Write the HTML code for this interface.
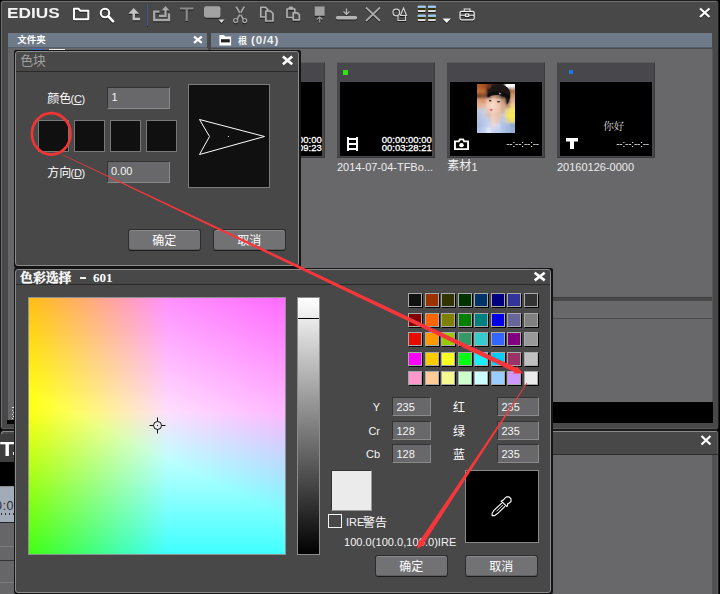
<!DOCTYPE html>
<html><head><meta charset="utf-8"><title>EDIUS</title>
<style>
*{margin:0;padding:0;box-sizing:border-box}
html,body{width:720px;height:594px;overflow:hidden;background:#000}
body{position:relative;font-family:"Liberation Sans",sans-serif;font-size:11px;color:#fff}
.a{position:absolute}
.plane i{display:block;height:1px;width:100%}
.plane{position:absolute;overflow:hidden}
.inp{position:absolute;background:#68686a;border:1px solid;border-color:#333 #8a8a8a #8a8a8a #333;color:#f4f4f4;font-size:11px;line-height:19px;padding-left:3.500px;height:19px}
.btn{position:absolute;background:#727274;border:1px solid #2c2c2c;border-bottom-color:#1c1c1c;border-radius:3px;height:22px;box-shadow:inset 0 1px 0 #8a8a8c, inset 0 -1px 0 #5c5c5e}
.sw{position:absolute;width:14px;height:14px;border:1px solid #a8a8a8;box-shadow:1px 1px 0 #000}
.bsw{position:absolute;width:31px;height:32px;border:1px solid #787878;background:#101010}
.th{position:absolute;width:98px;height:96px;background:#48484c;border-top:1px solid #5c5c5e;border-right:1px solid #3a3a3a;border-bottom:1px solid #3a3a3a}
.th .bk{position:absolute;left:3px;top:19px;width:92px;height:74px;background:#000}
.tc{position:absolute;font-size:10px;line-height:9.143px;color:#fff;text-align:right;letter-spacing:-0.350px;white-space:nowrap;transform:scaleY(0.875);transform-origin:0 0}
.nm{position:absolute;font-size:11px;color:#ececec;white-space:nowrap;top:161px;line-height:13px}
svg text{font-family:"Liberation Sans","Noto Sans CJK SC",sans-serif}
</style></head><body>

<div class="a" style="left:0;top:0;width:719px;height:430px;background:#484848;border:1px solid #1c1c1c;border-radius:3px;box-shadow:inset 1px 1px 0 #707070, inset 0 -1px 0 #585858"></div>
<div class="a" style="left:6.500px;top:6px;font-weight:bold;font-size:13.800px;line-height:16px;color:#f4f4f4;transform-origin:0 50%;transform:scaleX(1.250);letter-spacing:0px">EDIUS</div>
<svg class="a" style="left:0;top:0;filter:drop-shadow(0.800px 1px 0.400px rgba(0,0,0,0.600))" width="720" height="30" viewBox="0 0 720 30" fill="none">

<!-- folder -->
<path d="M74 8.700h4.500l1.500 2h8.300v8.600h-14.300z" stroke="#fff" stroke-width="2" stroke-linejoin="round"/>
<!-- search -->
<circle cx="105" cy="13" r="4.2" stroke="#fff" stroke-width="2"/><path d="M108.5 16.5l4.6 4.8" stroke="#fff" stroke-width="2.6" stroke-linecap="round"/>
<!-- up -->
<path d="M133.700 12v7h6.300" stroke="#c4c4c4" stroke-width="2.400"/><path d="M128.300 13.800l5.400-5.800 5.400 5.800z" fill="#c4c4c4"/>
<!-- sep -->
<path d="M147.5 4v22" stroke="#3c5a8c" stroke-width="1"/>
<!-- export -->
<path d="M159.500 11.700h-5.300v8.300h14.800v-6.500" stroke="#a8a8a8" stroke-width="2.300"/><path d="M159 16h6.500v-6" stroke="#a8a8a8" stroke-width="2.300"/><path d="M161.500 10.500l4-4.500 4 4.500z" fill="#a8a8a8"/>
<!-- T -->
<path d="M180 8.500h13.500M186.700 8.500v12.500" stroke="#8c8c8c" stroke-width="2.200"/>
<!-- rect -->
<rect x="204" y="6.3" width="16.500" height="11.400" rx="2" fill="#a2a2a2"/>
<path d="M218.500 19.500h6l-3 3.500z" fill="#d8d8d8"/>
<!-- scissors -->
<path d="M235.200 6.800l1.900-0.300 6.600 12-1.300 0.900zM245.200 6.800l-1.900-0.300-6.600 12 1.300 0.900z" fill="#a8a8a8"/><circle cx="235.700" cy="20.600" r="2" stroke="#a8a8a8" stroke-width="1.300"/><circle cx="244.700" cy="20.600" r="2" stroke="#a8a8a8" stroke-width="1.300"/>
<!-- copy -->
<path d="M260.800 7.400h4.700l2.300 2.300v7.300h-7z" stroke="#b0b0b0" stroke-width="1.700" stroke-linejoin="round"/><path d="M265.800 11h4.700l2.500 2.500v7.500h-7.200z" stroke="#b0b0b0" stroke-width="1.700" fill="#484848" stroke-linejoin="round"/>
<!-- paste -->
<path d="M287 9h7.800v8.500h-7.800z" stroke="#b0b0b0" stroke-width="1.700" stroke-linejoin="round"/><path d="M289.200 7h3.600v2h-3.600z" fill="#b0b0b0" stroke="#b0b0b0" stroke-width="0.800"/><path d="M293.200 12.800h4.200l2 2v5h-6.200z" stroke="#b0b0b0" stroke-width="1.700" fill="#484848" stroke-linejoin="round"/>
<!-- square arrow -->
<rect x="314.7" y="6.5" width="10" height="9.3" fill="#a0a0a0"/><path d="M319.700 17v5.500M317 19.500l2.700-2.500 2.700 2.500" stroke="#a0a0a0" stroke-width="1.200"/>
<!-- download -->
<rect x="335.800" y="16" width="21.400" height="3.600" rx="1.800" fill="#b4b4b4"/><path d="M346.500 8.500v5M343.500 11.500l3 3 3-3" stroke="#b4b4b4" stroke-width="1.300"/>
<!-- X -->
<path d="M366 7.500l14 13.500M380 7.500l-14 13.500" stroke="#a8a8a8" stroke-width="1.800"/>
<!-- shapes -->
<circle cx="396.300" cy="12.500" r="3.300" stroke="#d0d0d0" stroke-width="1.300"/><path d="M403.500 8l3 7.500h-6z" stroke="#d0d0d0" stroke-width="1.200"/><path d="M398 16v4.500h7.500v-4.500" stroke="#d0d0d0" stroke-width="1.200"/>
<!-- grid -->
<g><rect x="417.8" y="5.8" width="7.800" height="6.200" rx="0.800" fill="#e4e4e4"/><rect x="417.8" y="5.8" width="7.800" height="2.100" fill="#9ccdfa"/><rect x="417.8" y="7.9" width="7.800" height="2.200" fill="#34340c"/><rect x="428" y="5.8" width="7.800" height="6.200" rx="0.800" fill="#e4e4e4"/><rect x="428" y="5.8" width="7.800" height="2.100" fill="#9ccdfa"/><rect x="428" y="7.9" width="7.800" height="2.200" fill="#34340c"/><rect x="417.8" y="14.8" width="7.800" height="6.200" rx="0.800" fill="#e4e4e4"/><rect x="417.8" y="14.8" width="7.800" height="2.100" fill="#9ccdfa"/><rect x="417.8" y="16.9" width="7.800" height="2.200" fill="#34340c"/><rect x="428" y="14.8" width="7.800" height="6.200" rx="0.800" fill="#e4e4e4"/><rect x="428" y="14.8" width="7.800" height="2.100" fill="#9ccdfa"/><rect x="428" y="16.9" width="7.800" height="2.200" fill="#34340c"/></g>
<path d="M442.500 18.500h8.400l-4.200 4.500z" fill="#f4f4f4"/>
<!-- toolbox -->
<rect x="460" y="11.300" width="14.200" height="8.500" rx="1.500" stroke="#ececec" stroke-width="1.250"/><path d="M464.200 11.300v-2.300h5.800v2.300M460 15.200h5.500M468.700 15.200h5.500M465.500 14h3.200v2.400h-3.200z" stroke="#ececec" stroke-width="1.100"/>
<!-- window close -->
<path d="M700 8.500l9.500 8.500M709.500 8.500l-9.500 8.500" stroke="#fff" stroke-width="2.200"/>
</svg>
<div class="a" style="left:8px;top:33px;width:199px;height:15px;background:#6e7a88;border-bottom:1px solid #56606c"></div>
<div class="a" style="left:211px;top:33px;width:501px;height:15px;background:#6e7a88;border-bottom:1px solid #56606c"></div>
<svg style="position:absolute;left:17px;top:35px;overflow:visible" width="30" height="13" viewBox="0 0 30 13"><text x="0.200" y="8.300" font-size="9.500" font-weight="bold" fill="#fff">文件夹</text></svg>
<svg class="a" style="left:190px;top:33px" width="16" height="14" viewBox="0 0 16 14"><path d="M4 3.600l7.800 6.200M11.800 3.600l-7.800 6.200" stroke="#fff" stroke-width="2.300"/></svg>
<svg class="a" style="left:218px;top:34px" width="15" height="13" viewBox="0 0 15 13"><path d="M1.400 1h4.600l1 1.500h6.100v9h-11.700z" fill="#fff"/><rect x="3" y="5.200" width="8.800" height="3.200" fill="#222"/></svg>
<svg style="position:absolute;left:237.5px;top:35.5px;overflow:visible" width="11" height="13" viewBox="0 0 11 13"><text x="0.100" y="8" font-size="9" font-weight="bold" fill="#f4f4f4">根</text></svg>
<div class="a" style="left:251px;top:32px;font-size:11.500px;font-weight:bold;line-height:16px;color:#f0f0f0;letter-spacing:0.900px">(0/4)</div>
<div class="a" style="left:8px;top:48px;width:200px;height:372px;background:#666668"></div>
<div class="a" style="left:7px;top:420px;width:8px;height:4px;background:#000"></div>
<div class="a" style="left:31px;top:49px;width:13px;height:1px;background:#2a6ae0"></div><div class="a" style="left:49px;top:49px;width:16px;height:1px;background:#f0f0f0"></div>
<div class="a" style="left:12px;top:407px;width:1px;height:1px;background:#e0e0e0"></div><div class="a" style="left:13px;top:407px;width:1px;height:1px;background:#e0e0e0"></div><div class="a" style="left:12px;top:410px;width:1px;height:1px;background:#e0e0e0"></div><div class="a" style="left:13px;top:412px;width:1px;height:1px;background:#e0e0e0"></div><div class="a" style="left:12px;top:414px;width:1px;height:1px;background:#e0e0e0"></div><div class="a" style="left:13px;top:416px;width:1px;height:1px;background:#e0e0e0"></div><div class="a" style="left:12px;top:418px;width:1px;height:1px;background:#e0e0e0"></div>
<div class="a" style="left:208px;top:48px;width:3px;height:380px;background:#484848"></div>
<div class="a" style="left:211px;top:48px;width:502px;height:1px;background:#4a4a4c"></div>
<div class="a" style="left:211px;top:49px;width:501px;height:248px;background:#68686a"></div>
<div class="a" style="left:211px;top:297px;width:502px;height:1px;background:#3c3c3c"></div>
<div class="a" style="left:211px;top:301px;width:501px;height:101px;background:#68686a"></div>
<div class="a" style="left:211px;top:318px;width:501px;height:1px;background:#4a4a4a"></div>
<div class="a" style="left:211px;top:402px;width:502px;height:21px;background:#000"></div>
<div class="a" style="left:712px;top:49px;width:1px;height:353px;background:#555"></div>
<div class="th" style="left:227px;top:62px"><div class="bk"></div><svg class="a" style="left:0;top:0" width="98" height="96" viewBox="0 0 98 96"><text x="94.700" y="80" text-anchor="end" font-size="9.450" fill="#fff" stroke="#fff" stroke-width="0.300">00:00:00:00</text><text x="94.700" y="88" text-anchor="end" font-size="9.450" fill="#fff" stroke="#fff" stroke-width="0.300">00:00:09:23</text></svg></div>
<div class="th" style="left:337px;top:62px"><div class="bk"></div><div class="a" style="left:6px;top:7px;width:4.500px;height:4.500px;background:#2fe60f"></div><svg class="a" style="left:10px;top:74px" width="11" height="14" viewBox="0 0 11 14"><path d="M0 0h2v14h-2zM9 0h2v14h-2zM2 1h7v2h-7zM2 6h7v2h-7zM2 11h7v2h-7z" fill="#fff"/></svg><svg class="a" style="left:0;top:0" width="98" height="96" viewBox="0 0 98 96"><text x="94.700" y="80" text-anchor="end" font-size="9.450" fill="#fff" stroke="#fff" stroke-width="0.300">00:00:00:00</text><text x="94.700" y="88" text-anchor="end" font-size="9.450" fill="#fff" stroke="#fff" stroke-width="0.300">00:03:28:21</text></svg></div>
<div class="th" style="left:447px;top:62px"><div class="bk"></div><svg class="a" style="left:30px;top:21px" width="38" height="49" viewBox="0 0 38 49">
<defs><filter id="bl" x="-30%" y="-30%" width="160%" height="160%"><feGaussianBlur stdDeviation="1.250"/></filter>
<filter id="bl2" x="-20%" y="-20%" width="140%" height="140%"><feGaussianBlur stdDeviation="0.450"/></filter>
<clipPath id="pc"><rect width="38" height="49"/></clipPath></defs>
<g clip-path="url(#pc)"><rect width="38" height="49" fill="#c0a090"/>
<g filter="url(#bl)"><rect x="-5.30" y="-5.30" width="10.35" height="10.50" fill="#b05a28"/><rect x="4.45" y="-5.30" width="5.35" height="10.50" fill="#a85020"/><rect x="9.20" y="-5.30" width="5.35" height="10.50" fill="#6a3a20"/><rect x="13.95" y="-5.30" width="5.35" height="10.50" fill="#30201c"/><rect x="18.70" y="-5.30" width="5.35" height="10.50" fill="#2a1c1a"/><rect x="23.45" y="-5.30" width="5.35" height="10.50" fill="#352420"/><rect x="28.20" y="-5.30" width="5.35" height="10.50" fill="#f0f0f8"/><rect x="32.95" y="-5.30" width="10.35" height="10.50" fill="#e8e0e0"/><rect x="-5.30" y="4.60" width="10.35" height="5.50" fill="#c07038"/><rect x="4.45" y="4.60" width="5.35" height="5.50" fill="#b86830"/><rect x="9.20" y="4.60" width="5.35" height="5.50" fill="#2a1a18"/><rect x="13.95" y="4.60" width="5.35" height="5.50" fill="#181414"/><rect x="18.70" y="4.60" width="5.35" height="5.50" fill="#1c1616"/><rect x="23.45" y="4.60" width="5.35" height="5.50" fill="#281c1a"/><rect x="28.20" y="4.60" width="5.35" height="5.50" fill="#4a3028"/><rect x="32.95" y="4.60" width="10.35" height="5.50" fill="#b87850"/><rect x="-5.30" y="9.50" width="10.35" height="5.50" fill="#7a4828"/><rect x="4.45" y="9.50" width="5.35" height="5.50" fill="#8a5030"/><rect x="9.20" y="9.50" width="5.35" height="5.50" fill="#50302a"/><rect x="13.95" y="9.50" width="5.35" height="5.50" fill="#c09078"/><rect x="18.70" y="9.50" width="5.35" height="5.50" fill="#a07860"/><rect x="23.45" y="9.50" width="5.35" height="5.50" fill="#2a1c1a"/><rect x="28.20" y="9.50" width="5.35" height="5.50" fill="#3a2822"/><rect x="32.95" y="9.50" width="10.35" height="5.50" fill="#d09870"/><rect x="-5.30" y="14.40" width="10.35" height="5.50" fill="#e0a078"/><rect x="4.45" y="14.40" width="5.35" height="5.50" fill="#d89870"/><rect x="9.20" y="14.40" width="5.35" height="5.50" fill="#f0c8b0"/><rect x="13.95" y="14.40" width="5.35" height="5.50" fill="#f4d4c0"/><rect x="18.70" y="14.40" width="5.35" height="5.50" fill="#e8c0a8"/><rect x="23.45" y="14.40" width="5.35" height="5.50" fill="#c09880"/><rect x="28.20" y="14.40" width="5.35" height="5.50" fill="#402c26"/><rect x="32.95" y="14.40" width="10.35" height="5.50" fill="#e0b090"/><rect x="-5.30" y="19.30" width="10.35" height="5.50" fill="#e8b090"/><rect x="4.45" y="19.30" width="5.35" height="5.50" fill="#e0b8a0"/><rect x="9.20" y="19.30" width="5.35" height="5.50" fill="#f4d0bc"/><rect x="13.95" y="19.30" width="5.35" height="5.50" fill="#f8dccb"/><rect x="18.70" y="19.30" width="5.35" height="5.50" fill="#f0c8b4"/><rect x="23.45" y="19.30" width="5.35" height="5.50" fill="#d8a890"/><rect x="28.20" y="19.30" width="5.35" height="5.50" fill="#c09070"/><rect x="32.95" y="19.30" width="10.35" height="5.50" fill="#f0d080"/><rect x="-5.30" y="24.20" width="10.35" height="5.50" fill="#c0c8d8"/><rect x="4.45" y="24.20" width="5.35" height="5.50" fill="#c8d0e0"/><rect x="9.20" y="24.20" width="5.35" height="5.50" fill="#f0c8b4"/><rect x="13.95" y="24.20" width="5.35" height="5.50" fill="#f4d0c0"/><rect x="18.70" y="24.20" width="5.35" height="5.50" fill="#eec4b0"/><rect x="23.45" y="24.20" width="5.35" height="5.50" fill="#d0b098"/><rect x="28.20" y="24.20" width="5.35" height="5.50" fill="#e8d890"/><rect x="32.95" y="24.20" width="10.35" height="5.50" fill="#f8e860"/><rect x="-5.30" y="29.10" width="10.35" height="5.50" fill="#b8c4dc"/><rect x="4.45" y="29.10" width="5.35" height="5.50" fill="#c0cce4"/><rect x="9.20" y="29.10" width="5.35" height="5.50" fill="#d8c0b8"/><rect x="13.95" y="29.10" width="5.35" height="5.50" fill="#f0ccb8"/><rect x="18.70" y="29.10" width="5.35" height="5.50" fill="#e8c0a8"/><rect x="23.45" y="29.10" width="5.35" height="5.50" fill="#c8c8d0"/><rect x="28.20" y="29.10" width="5.35" height="5.50" fill="#f4e468"/><rect x="32.95" y="29.10" width="10.35" height="5.50" fill="#f8e850"/><rect x="-5.30" y="34.00" width="10.35" height="5.50" fill="#b0c0e0"/><rect x="4.45" y="34.00" width="5.35" height="5.50" fill="#b8c8e8"/><rect x="9.20" y="34.00" width="5.35" height="5.50" fill="#c0d0ec"/><rect x="13.95" y="34.00" width="5.35" height="5.50" fill="#f0d0c0"/><rect x="18.70" y="34.00" width="5.35" height="5.50" fill="#e0c8c0"/><rect x="23.45" y="34.00" width="5.35" height="5.50" fill="#b8c8e8"/><rect x="28.20" y="34.00" width="5.35" height="5.50" fill="#d8d498"/><rect x="32.95" y="34.00" width="10.35" height="5.50" fill="#f0e060"/><rect x="-5.30" y="38.90" width="10.35" height="5.50" fill="#a8bce0"/><rect x="4.45" y="38.90" width="5.35" height="5.50" fill="#b8c8ec"/><rect x="9.20" y="38.90" width="5.35" height="5.50" fill="#c8d4f0"/><rect x="13.95" y="38.90" width="5.35" height="5.50" fill="#e8d8d8"/><rect x="18.70" y="38.90" width="5.35" height="5.50" fill="#d0d8f0"/><rect x="23.45" y="38.90" width="5.35" height="5.50" fill="#b0c4e8"/><rect x="28.20" y="38.90" width="5.35" height="5.50" fill="#a8bce0"/><rect x="32.95" y="38.90" width="10.35" height="5.50" fill="#90a8d0"/><rect x="-5.30" y="43.80" width="10.35" height="10.50" fill="#b0c4e8"/><rect x="4.45" y="43.80" width="5.35" height="10.50" fill="#c0d0f0"/><rect x="9.20" y="43.80" width="5.35" height="10.50" fill="#e0e8f8"/><rect x="13.95" y="43.80" width="5.35" height="10.50" fill="#c8d4f0"/><rect x="18.70" y="43.80" width="5.35" height="10.50" fill="#c0d0f0"/><rect x="23.45" y="43.80" width="5.35" height="10.50" fill="#b0c4e8"/><rect x="28.20" y="43.80" width="5.35" height="10.50" fill="#a0b8e0"/><rect x="32.95" y="43.80" width="10.35" height="10.50" fill="#98b0d8"/></g>
<g filter="url(#bl2)">
<path d="M10.500 12c0-7 5-11.500 12-11.500s12 5 10.500 13c-0.500 3-2 6-3.500 7.500c0.500-4 0-8-2.500-10c-4-2-10-1.500-13.500 0.500c-1.500 1-2.500 2.500-3 0.500z" fill="#1e1614"/>
<path d="M10.500 10.500c5-4.500 15-4.500 22 1.500l-0.800 3.200c-6-5-14.500-5.500-21-2z" fill="#0c0a0c"/>
<path d="M22 8.500l2.500 1.200-2 0.800z" fill="#d8d8d8"/>
<ellipse cx="14.200" cy="25.800" rx="1.600" ry="0.900" fill="#cc6a74"/>
<ellipse cx="13.200" cy="16.800" rx="1.400" ry="0.800" fill="#3a2420"/><ellipse cx="21.500" cy="17.800" rx="1.600" ry="0.800" fill="#3a2420"/>
<rect x="29" y="0" width="8" height="2.500" fill="#ffffff"/>
</g></g></svg><svg class="a" style="left:7px;top:75px" width="15" height="12" viewBox="0 0 14 12" preserveAspectRatio="none"><path d="M0.900 3.300h3.600l1-2h3l1 2h3.600v7.800h-12.200z" fill="#000" stroke="#fff" stroke-width="1.800"/><circle cx="7" cy="7.200" r="2.100" fill="#fff"/></svg><div class="tc" style="right:5px;top:77px;letter-spacing:-0.200px;font-size:10px">--:--:--:--</div></div>
<div class="th" style="left:557px;top:62px"><div class="bk"></div><div class="a" style="left:12px;top:7px;width:4px;height:4px;background:#1c78e8"></div><svg class="a" style="left:9px;top:75px" width="12" height="11" viewBox="0 0 12 11"><path d="M0 0h12v3.500h-4v7.500h-4v-7.500h-4z" fill="#fff"/></svg><div class="tc" style="right:5px;top:77px;letter-spacing:-0.200px;font-size:10px">--:--:--:--</div></div>
<svg style="position:absolute;left:603px;top:121px;overflow:visible" width="23" height="14" viewBox="0 0 23 14"><text x="0.200" y="9.300" font-size="10.600" fill="#dcdcdc" style="font-family:'Liberation Serif','Noto Serif CJK SC',serif">你好</text></svg>
<div class="nm" style="left:337px">2014-07-04-TFBo...</div>
<div class="nm" style="left:557px">20160126-0000</div>
<svg style="position:absolute;left:447px;top:159px;overflow:visible" width="26" height="16" viewBox="0 0 26 16"><text x="0.200" y="10.700" font-size="12" fill="#f0f0f0">素材</text></svg>
<div class="nm" style="left:471.500px">1</div>
<div class="a" style="left:0;top:430px;width:719px;height:180px;background:#484848;border:1px solid #1c1c1c;border-radius:3px;box-shadow:inset 1px 1px 0 #8a8a8a, inset -1px 0 0 #5c5c5c"></div>
<div class="a" style="left:2px;top:454px;width:716px;height:1px;background:#2c2c2c"></div>
<div class="a" style="left:2px;top:455px;width:710px;height:140px;background:#68686a"></div>
<div class="a" style="left:712px;top:455px;width:5px;height:140px;background:#525254"></div>
<svg class="a" style="left:698px;top:433px" width="16" height="14" viewBox="0 0 16 14"><path d="M3.500 3l9 8.500M12.500 3l-9 8.500" stroke="#fff" stroke-width="2.200"/></svg>
<div class="a" style="left:0px;top:434px;width:15px;height:28px;background:#3e3e3e"></div>
<div class="a" style="left:0px;top:438px;font-size:20px;font-weight:bold;line-height:22px;color:#fff;width:15px;height:22px;overflow:hidden;white-space:nowrap"><span style="display:inline-block;margin-left:-0.500px;transform-origin:0 50%;transform:scaleX(1.180)">T</span></div>
<div class="a" style="left:13px;top:452px;width:2px;height:3px;background:#e8e8e8"></div>
<div class="a" style="left:0px;top:462px;width:15px;height:24px;background:#000"></div>
<div class="a" style="left:0px;top:486px;width:15px;height:36px;background:#a2abb8;border-top:1px solid #8c8c8c"></div>
<div class="a" style="left:0px;top:499.500px;font-size:12.500px;line-height:13px;color:#2c2c2c;width:14px;overflow:hidden;white-space:nowrap;text-align:right;direction:rtl"><span style="direction:ltr;unicode-bidi:bidi-override;letter-spacing:0.500px">0:0</span></div>
<div class="a" style="left:1px;top:513px;width:14px;height:2px;background:repeating-linear-gradient(90deg,#333 0 1px,transparent 1px 4px)"></div>
<div class="a" style="left:0px;top:522px;width:15px;height:72px;background:#666668;border-top:1px solid #222"></div>
<div class="a" style="left:0px;top:546px;width:15px;height:1px;background:#7c7c7c"></div><div class="a" style="left:0px;top:560px;width:15px;height:1px;background:#333"></div><div class="a" style="left:0px;top:582px;width:15px;height:1px;background:#7c7c7c"></div>
<div class="a" style="left:14px;top:50px;width:287px;height:218px;background:#141414;border-radius:2px"></div>
<div class="a" style="left:15px;top:51px;width:284px;height:215px;background:#484848;border:1px solid #8a8a8a;border-radius:3px"></div>
<div class="a" style="left:16px;top:71px;width:282px;height:1px;background:#2a2a2a"></div>
<svg style="position:absolute;left:20px;top:54px;overflow:visible" width="27" height="16" viewBox="0 0 27 16"><text x="0.200" y="11.300" font-size="12.800" fill="#a0a0a0">色块</text></svg>
<svg class="a" style="left:280px;top:53px" width="16" height="15" viewBox="0 0 16 15"><path d="M2.900 3.500l9.300 7.800M12.200 3.500l-9.300 7.800" stroke="#fff" stroke-width="2.600"/></svg>
<svg style="position:absolute;left:46.5px;top:92px;overflow:visible" width="26" height="16" viewBox="0 0 26 16"><text x="0.200" y="10.700" font-size="12" fill="#fff">颜色</text></svg>
<div class="a" style="left:70.500px;top:92px;font-size:11px;line-height:15px;color:#f4f4f4;letter-spacing:-0.300px">(<u>C</u>)</div>
<svg style="position:absolute;left:46.5px;top:166px;overflow:visible" width="26" height="16" viewBox="0 0 26 16"><text x="0.200" y="10.700" font-size="12" fill="#fff">方向</text></svg>
<div class="a" style="left:70.500px;top:166px;font-size:11px;line-height:15px;color:#f4f4f4;letter-spacing:-0.300px">(<u>D</u>)</div>
<div class="inp" style="left:107px;top:87px;width:63px;height:22px;line-height:19px">1</div>
<div class="inp" style="left:107px;top:161px;width:63px;height:22px;line-height:19px;padding-left:3px">0.00</div>
<div class="bsw" style="left:38px;top:120px"></div>
<div class="bsw" style="left:74px;top:120px"></div>
<div class="bsw" style="left:110px;top:120px"></div>
<div class="bsw" style="left:146px;top:120px"></div>
<div class="a" style="left:188px;top:84px;width:82px;height:104px;background:#101010;border:1px solid #7c7c7c"></div>
<svg class="a" style="left:188px;top:84px" width="82" height="104" viewBox="188 84 82 104"><path d="M199.500 119.500L264.500 136.500L199.500 154.500L209.500 136.500z" stroke="#fff" stroke-width="1" fill="none"/><rect x="228" y="136" width="1" height="1" fill="#ccc"/></svg>
<div class="btn" style="left:128px;top:229px;width:73px"></div>
<div class="btn" style="left:213px;top:229px;width:73px"></div>
<svg style="position:absolute;left:152px;top:234px;overflow:visible" width="26" height="16" viewBox="0 0 26 16"><text x="0.200" y="10.700" font-size="12" fill="#fff">确定</text></svg>
<svg style="position:absolute;left:237px;top:234px;overflow:visible" width="26" height="16" viewBox="0 0 26 16"><text x="0.200" y="10.700" font-size="12" fill="#fff">取消</text></svg>
<div class="a" style="left:14px;top:268px;width:539px;height:326px;background:#141414;border-radius:2px"></div>
<div class="a" style="left:15px;top:269px;width:536px;height:324px;background:#484848;border:1px solid #8a8a8a;border-radius:3px"></div>
<div class="a" style="left:16px;top:284px;width:534px;height:1px;background:#2a2a2a"></div>
<svg style="position:absolute;left:20px;top:270.5px;stroke:#fff;stroke-width:0.350px;overflow:visible" width="53" height="17" viewBox="0 0 53 17"><text x="0.100" y="11.200" font-size="12.800" font-weight="bold" fill="#fff" style="font-family:'Liberation Serif','Noto Serif CJK SC',serif">色彩选择</text></svg>
<div class="a" style="left:93px;top:270px;font-family:'Liberation Serif',serif;font-weight:bold;font-size:13px;line-height:16px;color:#fff;white-space:pre">601</div>
<div class="a" style="left:80px;top:277px;width:6px;height:1.500px;background:#f0f0f0"></div>
<svg class="a" style="left:531px;top:269px" width="16" height="15" viewBox="0 0 16 15"><path d="M3.700 3.700l10 7.700M13.700 3.700l-10 7.700" stroke="#fff" stroke-width="2.600"/></svg>
<div class="a" style="left:28px;top:297px;width:258px;height:258px;background:#909094"></div>
<div class="plane" style="left:29px;top:298px;width:256px;height:256px"><i style="background:linear-gradient(90deg,rgb(255,190,19) 0.0%,rgb(255,144,255) 54.6%,rgb(255,106,255) 100.0%)"></i><i style="background:linear-gradient(90deg,rgb(255,191,19) 0.0%,rgb(255,145,255) 54.6%,rgb(255,107,255) 100.0%)"></i><i style="background:linear-gradient(90deg,rgb(255,192,19) 0.0%,rgb(255,146,255) 54.6%,rgb(255,108,255) 100.0%)"></i><i style="background:linear-gradient(90deg,rgb(255,192,19) 0.0%,rgb(255,146,255) 54.6%,rgb(255,108,255) 100.0%)"></i><i style="background:linear-gradient(90deg,rgb(255,193,19) 0.0%,rgb(255,147,255) 54.6%,rgb(255,109,255) 100.0%)"></i><i style="background:linear-gradient(90deg,rgb(255,194,19) 0.0%,rgb(255,148,255) 54.6%,rgb(255,110,255) 100.0%)"></i><i style="background:linear-gradient(90deg,rgb(255,194,19) 0.0%,rgb(255,148,255) 54.6%,rgb(255,110,255) 100.0%)"></i><i style="background:linear-gradient(90deg,rgb(255,195,19) 0.0%,rgb(255,149,255) 54.6%,rgb(255,111,255) 100.0%)"></i><i style="background:linear-gradient(90deg,rgb(255,196,19) 0.0%,rgb(255,150,255) 54.6%,rgb(255,112,255) 100.0%)"></i><i style="background:linear-gradient(90deg,rgb(255,196,19) 0.0%,rgb(255,150,255) 54.6%,rgb(255,112,255) 100.0%)"></i><i style="background:linear-gradient(90deg,rgb(255,197,19) 0.0%,rgb(255,151,255) 54.6%,rgb(255,113,255) 100.0%)"></i><i style="background:linear-gradient(90deg,rgb(255,198,19) 0.0%,rgb(255,152,255) 54.6%,rgb(255,114,255) 100.0%)"></i><i style="background:linear-gradient(90deg,rgb(255,198,19) 0.0%,rgb(255,153,255) 54.6%,rgb(255,114,255) 100.0%)"></i><i style="background:linear-gradient(90deg,rgb(255,199,19) 0.0%,rgb(255,153,255) 54.6%,rgb(255,115,255) 100.0%)"></i><i style="background:linear-gradient(90deg,rgb(255,200,19) 0.0%,rgb(255,154,255) 54.6%,rgb(255,116,255) 100.0%)"></i><i style="background:linear-gradient(90deg,rgb(255,200,19) 0.0%,rgb(255,155,255) 54.6%,rgb(255,116,255) 100.0%)"></i><i style="background:linear-gradient(90deg,rgb(255,201,19) 0.0%,rgb(255,155,255) 54.6%,rgb(255,117,255) 100.0%)"></i><i style="background:linear-gradient(90deg,rgb(255,202,19) 0.0%,rgb(255,156,255) 54.6%,rgb(255,118,255) 100.0%)"></i><i style="background:linear-gradient(90deg,rgb(255,202,19) 0.0%,rgb(255,157,255) 54.6%,rgb(255,119,255) 100.0%)"></i><i style="background:linear-gradient(90deg,rgb(255,203,19) 0.0%,rgb(255,157,255) 54.6%,rgb(255,119,255) 100.0%)"></i><i style="background:linear-gradient(90deg,rgb(255,204,19) 0.0%,rgb(255,158,255) 54.6%,rgb(255,120,255) 100.0%)"></i><i style="background:linear-gradient(90deg,rgb(255,204,19) 0.0%,rgb(255,159,255) 54.6%,rgb(255,121,255) 100.0%)"></i><i style="background:linear-gradient(90deg,rgb(255,205,19) 0.0%,rgb(255,159,255) 54.6%,rgb(255,121,255) 100.0%)"></i><i style="background:linear-gradient(90deg,rgb(255,206,19) 0.0%,rgb(255,160,255) 54.6%,rgb(255,122,255) 100.0%)"></i><i style="background:linear-gradient(90deg,rgb(255,207,19) 0.0%,rgb(255,161,255) 54.6%,rgb(255,123,255) 100.0%)"></i><i style="background:linear-gradient(90deg,rgb(255,207,19) 0.0%,rgb(255,161,255) 54.6%,rgb(255,123,255) 100.0%)"></i><i style="background:linear-gradient(90deg,rgb(255,208,19) 0.0%,rgb(255,162,255) 54.6%,rgb(255,124,255) 100.0%)"></i><i style="background:linear-gradient(90deg,rgb(255,209,19) 0.0%,rgb(255,163,255) 54.6%,rgb(255,125,255) 100.0%)"></i><i style="background:linear-gradient(90deg,rgb(255,209,19) 0.0%,rgb(255,163,255) 54.6%,rgb(255,125,255) 100.0%)"></i><i style="background:linear-gradient(90deg,rgb(255,210,19) 0.0%,rgb(255,164,255) 54.6%,rgb(255,126,255) 100.0%)"></i><i style="background:linear-gradient(90deg,rgb(255,211,19) 0.0%,rgb(255,165,255) 54.6%,rgb(255,127,255) 100.0%)"></i><i style="background:linear-gradient(90deg,rgb(255,211,19) 0.0%,rgb(255,165,255) 54.6%,rgb(255,127,255) 100.0%)"></i><i style="background:linear-gradient(90deg,rgb(255,212,19) 0.0%,rgb(255,166,255) 54.6%,rgb(255,128,255) 100.0%)"></i><i style="background:linear-gradient(90deg,rgb(255,213,19) 0.0%,rgb(255,167,255) 54.6%,rgb(255,129,255) 100.0%)"></i><i style="background:linear-gradient(90deg,rgb(255,213,19) 0.0%,rgb(255,167,255) 54.6%,rgb(255,129,255) 100.0%)"></i><i style="background:linear-gradient(90deg,rgb(255,214,19) 0.0%,rgb(255,168,255) 54.6%,rgb(255,130,255) 100.0%)"></i><i style="background:linear-gradient(90deg,rgb(255,215,19) 0.0%,rgb(255,169,255) 54.6%,rgb(255,131,255) 100.0%)"></i><i style="background:linear-gradient(90deg,rgb(255,215,19) 0.0%,rgb(255,170,255) 54.6%,rgb(255,131,255) 100.0%)"></i><i style="background:linear-gradient(90deg,rgb(255,216,19) 0.0%,rgb(255,170,255) 54.6%,rgb(255,132,255) 100.0%)"></i><i style="background:linear-gradient(90deg,rgb(255,217,19) 0.0%,rgb(255,171,255) 54.6%,rgb(255,133,255) 100.0%)"></i><i style="background:linear-gradient(90deg,rgb(255,217,19) 0.0%,rgb(255,172,255) 54.6%,rgb(255,133,255) 100.0%)"></i><i style="background:linear-gradient(90deg,rgb(255,218,19) 0.0%,rgb(255,172,255) 54.6%,rgb(255,134,255) 100.0%)"></i><i style="background:linear-gradient(90deg,rgb(255,219,19) 0.0%,rgb(255,173,255) 54.6%,rgb(255,135,255) 100.0%)"></i><i style="background:linear-gradient(90deg,rgb(255,219,19) 0.0%,rgb(255,174,255) 54.6%,rgb(255,136,255) 100.0%)"></i><i style="background:linear-gradient(90deg,rgb(255,220,19) 0.0%,rgb(255,174,255) 54.6%,rgb(255,136,255) 100.0%)"></i><i style="background:linear-gradient(90deg,rgb(255,221,19) 0.0%,rgb(255,175,255) 54.6%,rgb(255,137,255) 100.0%)"></i><i style="background:linear-gradient(90deg,rgb(255,222,19) 0.0%,rgb(255,176,255) 54.6%,rgb(255,138,255) 100.0%)"></i><i style="background:linear-gradient(90deg,rgb(255,222,19) 0.0%,rgb(255,176,255) 54.6%,rgb(255,138,255) 100.0%)"></i><i style="background:linear-gradient(90deg,rgb(255,223,19) 0.0%,rgb(255,177,255) 54.6%,rgb(255,139,255) 100.0%)"></i><i style="background:linear-gradient(90deg,rgb(255,224,19) 0.0%,rgb(255,178,255) 54.6%,rgb(255,140,255) 100.0%)"></i><i style="background:linear-gradient(90deg,rgb(255,224,19) 0.0%,rgb(255,178,255) 54.6%,rgb(255,140,255) 100.0%)"></i><i style="background:linear-gradient(90deg,rgb(255,225,19) 0.0%,rgb(255,179,255) 54.6%,rgb(255,141,255) 100.0%)"></i><i style="background:linear-gradient(90deg,rgb(255,226,19) 0.0%,rgb(255,180,255) 54.6%,rgb(255,142,255) 100.0%)"></i><i style="background:linear-gradient(90deg,rgb(255,226,19) 0.0%,rgb(255,180,255) 54.6%,rgb(255,142,255) 100.0%)"></i><i style="background:linear-gradient(90deg,rgb(255,227,19) 0.0%,rgb(255,181,255) 54.6%,rgb(255,143,255) 100.0%)"></i><i style="background:linear-gradient(90deg,rgb(255,228,19) 0.0%,rgb(255,182,255) 54.6%,rgb(255,144,255) 100.0%)"></i><i style="background:linear-gradient(90deg,rgb(255,228,19) 0.0%,rgb(255,182,255) 54.6%,rgb(255,144,255) 100.0%)"></i><i style="background:linear-gradient(90deg,rgb(255,229,19) 0.0%,rgb(255,183,255) 54.6%,rgb(255,145,255) 100.0%)"></i><i style="background:linear-gradient(90deg,rgb(255,230,19) 0.0%,rgb(255,184,255) 54.6%,rgb(255,146,255) 100.0%)"></i><i style="background:linear-gradient(90deg,rgb(255,230,19) 0.0%,rgb(255,185,255) 54.6%,rgb(255,146,255) 100.0%)"></i><i style="background:linear-gradient(90deg,rgb(255,231,19) 0.0%,rgb(255,185,255) 54.6%,rgb(255,147,255) 100.0%)"></i><i style="background:linear-gradient(90deg,rgb(255,232,19) 0.0%,rgb(255,186,255) 54.6%,rgb(255,148,255) 100.0%)"></i><i style="background:linear-gradient(90deg,rgb(255,232,19) 0.0%,rgb(255,187,255) 54.6%,rgb(255,148,255) 100.0%)"></i><i style="background:linear-gradient(90deg,rgb(255,233,19) 0.0%,rgb(255,187,255) 54.6%,rgb(255,149,255) 100.0%)"></i><i style="background:linear-gradient(90deg,rgb(255,234,19) 0.0%,rgb(255,188,255) 54.6%,rgb(255,150,255) 100.0%)"></i><i style="background:linear-gradient(90deg,rgb(255,234,19) 0.0%,rgb(255,189,255) 54.6%,rgb(255,150,255) 100.0%)"></i><i style="background:linear-gradient(90deg,rgb(255,235,19) 0.0%,rgb(255,189,255) 54.6%,rgb(255,151,255) 100.0%)"></i><i style="background:linear-gradient(90deg,rgb(255,236,19) 0.0%,rgb(255,190,255) 54.6%,rgb(255,152,255) 100.0%)"></i><i style="background:linear-gradient(90deg,rgb(255,236,19) 0.0%,rgb(255,191,255) 54.6%,rgb(255,153,255) 100.0%)"></i><i style="background:linear-gradient(90deg,rgb(255,237,19) 0.0%,rgb(255,191,255) 54.6%,rgb(255,153,255) 100.0%)"></i><i style="background:linear-gradient(90deg,rgb(255,238,19) 0.0%,rgb(255,192,255) 54.6%,rgb(255,154,255) 100.0%)"></i><i style="background:linear-gradient(90deg,rgb(255,239,19) 0.0%,rgb(255,193,255) 54.6%,rgb(255,155,255) 100.0%)"></i><i style="background:linear-gradient(90deg,rgb(255,239,19) 0.0%,rgb(255,193,255) 54.6%,rgb(255,155,255) 100.0%)"></i><i style="background:linear-gradient(90deg,rgb(255,240,19) 0.0%,rgb(255,194,255) 54.6%,rgb(255,156,255) 100.0%)"></i><i style="background:linear-gradient(90deg,rgb(255,241,19) 0.0%,rgb(255,195,255) 54.6%,rgb(255,157,255) 100.0%)"></i><i style="background:linear-gradient(90deg,rgb(255,241,19) 0.0%,rgb(255,195,255) 54.6%,rgb(255,157,255) 100.0%)"></i><i style="background:linear-gradient(90deg,rgb(255,242,19) 0.0%,rgb(255,196,255) 54.6%,rgb(255,158,255) 100.0%)"></i><i style="background:linear-gradient(90deg,rgb(255,243,19) 0.0%,rgb(255,197,255) 54.6%,rgb(255,159,255) 100.0%)"></i><i style="background:linear-gradient(90deg,rgb(255,243,19) 0.0%,rgb(255,197,255) 54.6%,rgb(255,159,255) 100.0%)"></i><i style="background:linear-gradient(90deg,rgb(255,244,19) 0.0%,rgb(255,198,255) 54.6%,rgb(255,160,255) 100.0%)"></i><i style="background:linear-gradient(90deg,rgb(255,245,19) 0.0%,rgb(255,199,255) 54.6%,rgb(255,161,255) 100.0%)"></i><i style="background:linear-gradient(90deg,rgb(255,245,19) 0.0%,rgb(255,199,255) 54.6%,rgb(255,161,255) 100.0%)"></i><i style="background:linear-gradient(90deg,rgb(255,246,19) 0.0%,rgb(255,200,255) 54.6%,rgb(255,162,255) 100.0%)"></i><i style="background:linear-gradient(90deg,rgb(255,247,19) 0.0%,rgb(255,201,255) 54.6%,rgb(255,163,255) 100.0%)"></i><i style="background:linear-gradient(90deg,rgb(255,247,19) 0.0%,rgb(255,202,255) 54.6%,rgb(255,163,255) 100.0%)"></i><i style="background:linear-gradient(90deg,rgb(255,248,19) 0.0%,rgb(255,202,255) 54.6%,rgb(255,164,255) 100.0%)"></i><i style="background:linear-gradient(90deg,rgb(255,249,19) 0.0%,rgb(255,203,255) 54.6%,rgb(255,165,255) 100.0%)"></i><i style="background:linear-gradient(90deg,rgb(255,249,19) 0.0%,rgb(255,204,255) 54.6%,rgb(255,165,255) 100.0%)"></i><i style="background:linear-gradient(90deg,rgb(255,250,19) 0.0%,rgb(255,204,255) 54.6%,rgb(255,166,255) 100.0%)"></i><i style="background:linear-gradient(90deg,rgb(255,251,19) 0.0%,rgb(255,205,255) 54.6%,rgb(255,167,255) 100.0%)"></i><i style="background:linear-gradient(90deg,rgb(255,251,19) 0.0%,rgb(255,206,255) 54.6%,rgb(255,168,255) 100.0%)"></i><i style="background:linear-gradient(90deg,rgb(255,252,19) 0.0%,rgb(255,206,255) 54.6%,rgb(255,168,255) 100.0%)"></i><i style="background:linear-gradient(90deg,rgb(255,253,19) 0.0%,rgb(255,207,255) 54.6%,rgb(255,169,255) 100.0%)"></i><i style="background:linear-gradient(90deg,rgb(255,253,19) 0.0%,rgb(255,208,255) 54.6%,rgb(255,170,255) 100.0%)"></i><i style="background:linear-gradient(90deg,rgb(255,254,19) 0.0%,rgb(255,208,255) 54.6%,rgb(255,170,255) 100.0%)"></i><i style="background:linear-gradient(90deg,rgb(255,255,19) 0.0%,rgb(255,209,255) 54.6%,rgb(255,171,255) 100.0%)"></i><i style="background:linear-gradient(90deg,rgb(255,255,19) 0.0%,rgb(255,255,22) 0.6%,rgb(255,210,255) 54.6%,rgb(255,172,255) 100.0%)"></i><i style="background:linear-gradient(90deg,rgb(255,255,19) 0.0%,rgb(255,255,25) 1.4%,rgb(255,210,255) 54.6%,rgb(255,172,255) 100.0%)"></i><i style="background:linear-gradient(90deg,rgb(255,255,19) 0.0%,rgb(255,255,29) 2.3%,rgb(255,211,255) 54.6%,rgb(255,173,255) 100.0%)"></i><i style="background:linear-gradient(90deg,rgb(255,255,19) 0.0%,rgb(255,255,32) 3.1%,rgb(255,212,255) 54.6%,rgb(255,174,255) 100.0%)"></i><i style="background:linear-gradient(90deg,rgb(255,255,19) 0.0%,rgb(255,255,36) 3.9%,rgb(255,212,255) 54.6%,rgb(255,174,255) 100.0%)"></i><i style="background:linear-gradient(90deg,rgb(255,255,19) 0.0%,rgb(255,255,39) 4.7%,rgb(255,213,255) 54.6%,rgb(255,175,255) 100.0%)"></i><i style="background:linear-gradient(90deg,rgb(255,255,19) 0.0%,rgb(255,255,43) 5.5%,rgb(255,214,255) 54.6%,rgb(255,176,255) 100.0%)"></i><i style="background:linear-gradient(90deg,rgb(255,255,19) 0.0%,rgb(255,255,46) 6.3%,rgb(255,214,255) 54.6%,rgb(255,176,255) 100.0%)"></i><i style="background:linear-gradient(90deg,rgb(255,255,19) 0.0%,rgb(255,255,50) 7.1%,rgb(255,215,255) 54.6%,rgb(255,177,255) 100.0%)"></i><i style="background:linear-gradient(90deg,rgb(255,255,19) 0.0%,rgb(255,255,53) 7.9%,rgb(255,216,255) 54.6%,rgb(255,178,255) 100.0%)"></i><i style="background:linear-gradient(90deg,rgb(255,255,19) 0.0%,rgb(255,255,57) 8.7%,rgb(255,216,255) 54.6%,rgb(255,178,255) 100.0%)"></i><i style="background:linear-gradient(90deg,rgb(255,255,19) 0.0%,rgb(255,255,60) 9.6%,rgb(255,217,255) 54.6%,rgb(255,179,255) 100.0%)"></i><i style="background:linear-gradient(90deg,rgb(255,255,19) 0.0%,rgb(255,255,64) 10.4%,rgb(255,218,255) 54.6%,rgb(255,180,255) 100.0%)"></i><i style="background:linear-gradient(90deg,rgb(255,255,19) 0.0%,rgb(255,255,67) 11.2%,rgb(255,219,255) 54.6%,rgb(255,180,255) 100.0%)"></i><i style="background:linear-gradient(90deg,rgb(255,255,19) 0.0%,rgb(255,255,71) 12.0%,rgb(255,219,255) 54.6%,rgb(255,181,255) 100.0%)"></i><i style="background:linear-gradient(90deg,rgb(255,255,19) 0.0%,rgb(255,255,74) 12.8%,rgb(255,220,255) 54.6%,rgb(255,182,255) 100.0%)"></i><i style="background:linear-gradient(90deg,rgb(255,255,19) 0.0%,rgb(255,255,78) 13.6%,rgb(255,221,255) 54.6%,rgb(255,182,255) 100.0%)"></i><i style="background:linear-gradient(90deg,rgb(254,255,19) 0.0%,rgb(254,255,81) 14.4%,rgb(254,221,255) 54.6%,rgb(254,183,255) 100.0%)"></i><i style="background:linear-gradient(90deg,rgb(253,255,19) 0.0%,rgb(253,255,85) 15.2%,rgb(253,222,255) 54.6%,rgb(253,184,255) 100.0%)"></i><i style="background:linear-gradient(90deg,rgb(252,255,19) 0.0%,rgb(252,255,88) 16.0%,rgb(252,223,255) 54.6%,rgb(252,185,255) 100.0%)"></i><i style="background:linear-gradient(90deg,rgb(250,255,19) 0.0%,rgb(250,255,92) 16.8%,rgb(250,223,255) 54.6%,rgb(250,185,255) 100.0%)"></i><i style="background:linear-gradient(90deg,rgb(249,255,19) 0.0%,rgb(249,255,95) 17.7%,rgb(249,224,255) 54.6%,rgb(249,186,255) 100.0%)"></i><i style="background:linear-gradient(90deg,rgb(248,255,19) 0.0%,rgb(248,255,99) 18.5%,rgb(248,225,255) 54.6%,rgb(248,187,255) 100.0%)"></i><i style="background:linear-gradient(90deg,rgb(246,255,19) 0.0%,rgb(246,255,102) 19.3%,rgb(246,225,255) 54.6%,rgb(246,187,255) 100.0%)"></i><i style="background:linear-gradient(90deg,rgb(245,255,19) 0.0%,rgb(245,255,106) 20.1%,rgb(245,226,255) 54.6%,rgb(245,188,255) 100.0%)"></i><i style="background:linear-gradient(90deg,rgb(244,255,19) 0.0%,rgb(244,255,109) 20.9%,rgb(244,227,255) 54.6%,rgb(244,189,255) 100.0%)"></i><i style="background:linear-gradient(90deg,rgb(242,255,19) 0.0%,rgb(242,255,113) 21.7%,rgb(242,227,255) 54.6%,rgb(242,189,255) 100.0%)"></i><i style="background:linear-gradient(90deg,rgb(241,255,19) 0.0%,rgb(241,255,116) 22.5%,rgb(241,228,255) 54.6%,rgb(241,190,255) 100.0%)"></i><i style="background:linear-gradient(90deg,rgb(240,255,19) 0.0%,rgb(240,255,120) 23.3%,rgb(240,229,255) 54.6%,rgb(240,191,255) 100.0%)"></i><i style="background:linear-gradient(90deg,rgb(238,255,19) 0.0%,rgb(238,255,123) 24.1%,rgb(238,229,255) 54.6%,rgb(238,191,255) 100.0%)"></i><i style="background:linear-gradient(90deg,rgb(237,255,19) 0.0%,rgb(237,255,127) 25.0%,rgb(237,230,255) 54.6%,rgb(237,192,255) 100.0%)"></i><i style="background:linear-gradient(90deg,rgb(236,255,19) 0.0%,rgb(236,255,130) 25.8%,rgb(236,231,255) 54.6%,rgb(236,193,255) 100.0%)"></i><i style="background:linear-gradient(90deg,rgb(234,255,19) 0.0%,rgb(234,255,134) 26.6%,rgb(234,231,255) 54.6%,rgb(234,193,255) 100.0%)"></i><i style="background:linear-gradient(90deg,rgb(233,255,19) 0.0%,rgb(233,255,137) 27.4%,rgb(233,232,255) 54.6%,rgb(233,194,255) 100.0%)"></i><i style="background:linear-gradient(90deg,rgb(232,255,19) 0.0%,rgb(232,255,141) 28.2%,rgb(232,233,255) 54.6%,rgb(232,195,255) 100.0%)"></i><i style="background:linear-gradient(90deg,rgb(230,255,19) 0.0%,rgb(230,255,144) 29.0%,rgb(230,233,255) 54.6%,rgb(230,195,255) 100.0%)"></i><i style="background:linear-gradient(90deg,rgb(229,255,19) 0.0%,rgb(229,255,148) 29.8%,rgb(229,234,255) 54.6%,rgb(229,196,255) 100.0%)"></i><i style="background:linear-gradient(90deg,rgb(228,255,19) 0.0%,rgb(228,255,151) 30.6%,rgb(228,235,255) 54.6%,rgb(228,197,255) 100.0%)"></i><i style="background:linear-gradient(90deg,rgb(226,255,19) 0.0%,rgb(226,255,155) 31.4%,rgb(226,236,255) 54.6%,rgb(226,197,255) 100.0%)"></i><i style="background:linear-gradient(90deg,rgb(225,255,19) 0.0%,rgb(225,255,158) 32.3%,rgb(225,236,255) 54.6%,rgb(225,198,255) 100.0%)"></i><i style="background:linear-gradient(90deg,rgb(224,255,19) 0.0%,rgb(224,255,162) 33.1%,rgb(224,237,255) 54.6%,rgb(224,199,255) 100.0%)"></i><i style="background:linear-gradient(90deg,rgb(222,255,19) 0.0%,rgb(222,255,165) 33.9%,rgb(222,238,255) 54.6%,rgb(222,199,255) 100.0%)"></i><i style="background:linear-gradient(90deg,rgb(221,255,19) 0.0%,rgb(221,255,169) 34.7%,rgb(221,238,255) 54.6%,rgb(221,200,255) 100.0%)"></i><i style="background:linear-gradient(90deg,rgb(220,255,19) 0.0%,rgb(220,255,172) 35.5%,rgb(220,239,255) 54.6%,rgb(220,201,255) 100.0%)"></i><i style="background:linear-gradient(90deg,rgb(218,255,19) 0.0%,rgb(218,255,176) 36.3%,rgb(218,240,255) 54.6%,rgb(218,202,255) 100.0%)"></i><i style="background:linear-gradient(90deg,rgb(217,255,19) 0.0%,rgb(217,255,179) 37.1%,rgb(217,240,255) 54.6%,rgb(217,202,255) 100.0%)"></i><i style="background:linear-gradient(90deg,rgb(216,255,19) 0.0%,rgb(216,255,183) 37.9%,rgb(216,241,255) 54.6%,rgb(216,203,255) 100.0%)"></i><i style="background:linear-gradient(90deg,rgb(214,255,19) 0.0%,rgb(214,255,186) 38.7%,rgb(214,242,255) 54.6%,rgb(214,204,255) 100.0%)"></i><i style="background:linear-gradient(90deg,rgb(213,255,19) 0.0%,rgb(213,255,190) 39.6%,rgb(213,242,255) 54.6%,rgb(213,204,255) 100.0%)"></i><i style="background:linear-gradient(90deg,rgb(212,255,19) 0.0%,rgb(212,255,193) 40.4%,rgb(212,243,255) 54.6%,rgb(212,205,255) 100.0%)"></i><i style="background:linear-gradient(90deg,rgb(210,255,19) 0.0%,rgb(210,255,197) 41.2%,rgb(210,244,255) 54.6%,rgb(210,206,255) 100.0%)"></i><i style="background:linear-gradient(90deg,rgb(209,255,19) 0.0%,rgb(209,255,200) 42.0%,rgb(209,244,255) 54.6%,rgb(209,206,255) 100.0%)"></i><i style="background:linear-gradient(90deg,rgb(208,255,19) 0.0%,rgb(208,255,204) 42.8%,rgb(208,245,255) 54.6%,rgb(208,207,255) 100.0%)"></i><i style="background:linear-gradient(90deg,rgb(206,255,19) 0.0%,rgb(206,255,207) 43.6%,rgb(206,246,255) 54.6%,rgb(206,208,255) 100.0%)"></i><i style="background:linear-gradient(90deg,rgb(205,255,19) 0.0%,rgb(205,255,211) 44.4%,rgb(205,246,255) 54.6%,rgb(205,208,255) 100.0%)"></i><i style="background:linear-gradient(90deg,rgb(204,255,19) 0.0%,rgb(204,255,214) 45.2%,rgb(204,247,255) 54.6%,rgb(204,209,255) 100.0%)"></i><i style="background:linear-gradient(90deg,rgb(202,255,19) 0.0%,rgb(202,255,218) 46.0%,rgb(202,248,255) 54.6%,rgb(202,210,255) 100.0%)"></i><i style="background:linear-gradient(90deg,rgb(201,255,19) 0.0%,rgb(201,255,221) 46.8%,rgb(201,248,255) 54.6%,rgb(201,210,255) 100.0%)"></i><i style="background:linear-gradient(90deg,rgb(200,255,19) 0.0%,rgb(200,255,225) 47.7%,rgb(200,249,255) 54.6%,rgb(200,211,255) 100.0%)"></i><i style="background:linear-gradient(90deg,rgb(198,255,19) 0.0%,rgb(198,255,228) 48.5%,rgb(198,250,255) 54.6%,rgb(198,212,255) 100.0%)"></i><i style="background:linear-gradient(90deg,rgb(197,255,19) 0.0%,rgb(197,255,232) 49.3%,rgb(197,251,255) 54.6%,rgb(197,212,255) 100.0%)"></i><i style="background:linear-gradient(90deg,rgb(196,255,19) 0.0%,rgb(196,255,235) 50.1%,rgb(196,251,255) 54.6%,rgb(196,213,255) 100.0%)"></i><i style="background:linear-gradient(90deg,rgb(194,255,19) 0.0%,rgb(194,255,239) 50.9%,rgb(194,252,255) 54.6%,rgb(194,214,255) 100.0%)"></i><i style="background:linear-gradient(90deg,rgb(193,255,19) 0.0%,rgb(193,255,242) 51.7%,rgb(193,253,255) 54.6%,rgb(193,214,255) 100.0%)"></i><i style="background:linear-gradient(90deg,rgb(192,255,19) 0.0%,rgb(192,255,246) 52.5%,rgb(192,253,255) 54.6%,rgb(192,215,255) 100.0%)"></i><i style="background:linear-gradient(90deg,rgb(190,255,19) 0.0%,rgb(190,255,249) 53.3%,rgb(190,254,255) 54.6%,rgb(190,216,255) 100.0%)"></i><i style="background:linear-gradient(90deg,rgb(189,255,19) 0.0%,rgb(189,255,253) 54.1%,rgb(189,255,255) 54.6%,rgb(189,217,255) 100.0%)"></i><i style="background:linear-gradient(90deg,rgb(188,255,19) 0.0%,rgb(188,255,255) 54.6%,rgb(188,255,255) 55.0%,rgb(188,217,255) 100.0%)"></i><i style="background:linear-gradient(90deg,rgb(186,255,19) 0.0%,rgb(186,255,255) 54.6%,rgb(186,255,255) 55.8%,rgb(186,218,255) 100.0%)"></i><i style="background:linear-gradient(90deg,rgb(185,255,19) 0.0%,rgb(185,255,255) 54.6%,rgb(185,255,255) 56.6%,rgb(185,219,255) 100.0%)"></i><i style="background:linear-gradient(90deg,rgb(184,255,19) 0.0%,rgb(184,255,255) 54.6%,rgb(184,255,255) 57.4%,rgb(184,219,255) 100.0%)"></i><i style="background:linear-gradient(90deg,rgb(182,255,19) 0.0%,rgb(182,255,255) 54.6%,rgb(182,255,255) 58.2%,rgb(182,220,255) 100.0%)"></i><i style="background:linear-gradient(90deg,rgb(181,255,19) 0.0%,rgb(181,255,255) 54.6%,rgb(181,255,255) 59.0%,rgb(181,221,255) 100.0%)"></i><i style="background:linear-gradient(90deg,rgb(180,255,19) 0.0%,rgb(180,255,255) 54.6%,rgb(180,255,255) 59.8%,rgb(180,221,255) 100.0%)"></i><i style="background:linear-gradient(90deg,rgb(178,255,19) 0.0%,rgb(178,255,255) 54.6%,rgb(178,255,255) 60.6%,rgb(178,222,255) 100.0%)"></i><i style="background:linear-gradient(90deg,rgb(177,255,19) 0.0%,rgb(177,255,255) 54.6%,rgb(177,255,255) 61.4%,rgb(177,223,255) 100.0%)"></i><i style="background:linear-gradient(90deg,rgb(176,255,19) 0.0%,rgb(176,255,255) 54.6%,rgb(176,255,255) 62.3%,rgb(176,223,255) 100.0%)"></i><i style="background:linear-gradient(90deg,rgb(174,255,19) 0.0%,rgb(174,255,255) 54.6%,rgb(174,255,255) 63.1%,rgb(174,224,255) 100.0%)"></i><i style="background:linear-gradient(90deg,rgb(173,255,19) 0.0%,rgb(173,255,255) 54.6%,rgb(173,255,255) 63.9%,rgb(173,225,255) 100.0%)"></i><i style="background:linear-gradient(90deg,rgb(172,255,19) 0.0%,rgb(172,255,255) 54.6%,rgb(172,255,255) 64.7%,rgb(172,225,255) 100.0%)"></i><i style="background:linear-gradient(90deg,rgb(170,255,19) 0.0%,rgb(170,255,255) 54.6%,rgb(170,255,255) 65.5%,rgb(170,226,255) 100.0%)"></i><i style="background:linear-gradient(90deg,rgb(169,255,19) 0.0%,rgb(169,255,255) 54.6%,rgb(169,255,255) 66.3%,rgb(169,227,255) 100.0%)"></i><i style="background:linear-gradient(90deg,rgb(168,255,19) 0.0%,rgb(168,255,255) 54.6%,rgb(168,255,255) 67.1%,rgb(168,227,255) 100.0%)"></i><i style="background:linear-gradient(90deg,rgb(166,255,19) 0.0%,rgb(166,255,255) 54.6%,rgb(166,255,255) 67.9%,rgb(166,228,255) 100.0%)"></i><i style="background:linear-gradient(90deg,rgb(165,255,19) 0.0%,rgb(165,255,255) 54.6%,rgb(165,255,255) 68.7%,rgb(165,229,255) 100.0%)"></i><i style="background:linear-gradient(90deg,rgb(164,255,19) 0.0%,rgb(164,255,255) 54.6%,rgb(164,255,255) 69.5%,rgb(164,229,255) 100.0%)"></i><i style="background:linear-gradient(90deg,rgb(162,255,19) 0.0%,rgb(162,255,255) 54.6%,rgb(162,255,255) 70.4%,rgb(162,230,255) 100.0%)"></i><i style="background:linear-gradient(90deg,rgb(161,255,19) 0.0%,rgb(161,255,255) 54.6%,rgb(161,255,255) 71.2%,rgb(161,231,255) 100.0%)"></i><i style="background:linear-gradient(90deg,rgb(160,255,19) 0.0%,rgb(160,255,255) 54.6%,rgb(160,255,255) 72.0%,rgb(160,231,255) 100.0%)"></i><i style="background:linear-gradient(90deg,rgb(158,255,19) 0.0%,rgb(158,255,255) 54.6%,rgb(158,255,255) 72.8%,rgb(158,232,255) 100.0%)"></i><i style="background:linear-gradient(90deg,rgb(157,255,19) 0.0%,rgb(157,255,255) 54.6%,rgb(157,255,255) 73.6%,rgb(157,233,255) 100.0%)"></i><i style="background:linear-gradient(90deg,rgb(155,255,19) 0.0%,rgb(155,255,255) 54.6%,rgb(155,255,255) 74.4%,rgb(155,234,255) 100.0%)"></i><i style="background:linear-gradient(90deg,rgb(154,255,19) 0.0%,rgb(154,255,255) 54.6%,rgb(154,255,255) 75.2%,rgb(154,234,255) 100.0%)"></i><i style="background:linear-gradient(90deg,rgb(153,255,19) 0.0%,rgb(153,255,255) 54.6%,rgb(153,255,255) 76.0%,rgb(153,235,255) 100.0%)"></i><i style="background:linear-gradient(90deg,rgb(151,255,19) 0.0%,rgb(151,255,255) 54.6%,rgb(151,255,255) 76.8%,rgb(151,236,255) 100.0%)"></i><i style="background:linear-gradient(90deg,rgb(150,255,19) 0.0%,rgb(150,255,255) 54.6%,rgb(150,255,255) 77.7%,rgb(150,236,255) 100.0%)"></i><i style="background:linear-gradient(90deg,rgb(149,255,19) 0.0%,rgb(149,255,255) 54.6%,rgb(149,255,255) 78.5%,rgb(149,237,255) 100.0%)"></i><i style="background:linear-gradient(90deg,rgb(147,255,19) 0.0%,rgb(147,255,255) 54.6%,rgb(147,255,255) 79.3%,rgb(147,238,255) 100.0%)"></i><i style="background:linear-gradient(90deg,rgb(146,255,19) 0.0%,rgb(146,255,255) 54.6%,rgb(146,255,255) 80.1%,rgb(146,238,255) 100.0%)"></i><i style="background:linear-gradient(90deg,rgb(145,255,19) 0.0%,rgb(145,255,255) 54.6%,rgb(145,255,255) 80.9%,rgb(145,239,255) 100.0%)"></i><i style="background:linear-gradient(90deg,rgb(143,255,19) 0.0%,rgb(143,255,255) 54.6%,rgb(143,255,255) 81.7%,rgb(143,240,255) 100.0%)"></i><i style="background:linear-gradient(90deg,rgb(142,255,19) 0.0%,rgb(142,255,255) 54.6%,rgb(142,255,255) 82.5%,rgb(142,240,255) 100.0%)"></i><i style="background:linear-gradient(90deg,rgb(141,255,19) 0.0%,rgb(141,255,255) 54.6%,rgb(141,255,255) 83.3%,rgb(141,241,255) 100.0%)"></i><i style="background:linear-gradient(90deg,rgb(139,255,19) 0.0%,rgb(139,255,255) 54.6%,rgb(139,255,255) 84.1%,rgb(139,242,255) 100.0%)"></i><i style="background:linear-gradient(90deg,rgb(138,255,19) 0.0%,rgb(138,255,255) 54.6%,rgb(138,255,255) 85.0%,rgb(138,242,255) 100.0%)"></i><i style="background:linear-gradient(90deg,rgb(137,255,19) 0.0%,rgb(137,255,255) 54.6%,rgb(137,255,255) 85.8%,rgb(137,243,255) 100.0%)"></i><i style="background:linear-gradient(90deg,rgb(135,255,19) 0.0%,rgb(135,255,255) 54.6%,rgb(135,255,255) 86.6%,rgb(135,244,255) 100.0%)"></i><i style="background:linear-gradient(90deg,rgb(134,255,19) 0.0%,rgb(134,255,255) 54.6%,rgb(134,255,255) 87.4%,rgb(134,244,255) 100.0%)"></i><i style="background:linear-gradient(90deg,rgb(133,255,19) 0.0%,rgb(133,255,255) 54.6%,rgb(133,255,255) 88.2%,rgb(133,245,255) 100.0%)"></i><i style="background:linear-gradient(90deg,rgb(131,255,19) 0.0%,rgb(131,255,255) 54.6%,rgb(131,255,255) 89.0%,rgb(131,246,255) 100.0%)"></i><i style="background:linear-gradient(90deg,rgb(130,255,19) 0.0%,rgb(130,255,255) 54.6%,rgb(130,255,255) 89.8%,rgb(130,246,255) 100.0%)"></i><i style="background:linear-gradient(90deg,rgb(129,255,19) 0.0%,rgb(129,255,255) 54.6%,rgb(129,255,255) 90.6%,rgb(129,247,255) 100.0%)"></i><i style="background:linear-gradient(90deg,rgb(127,255,19) 0.0%,rgb(127,255,255) 54.6%,rgb(127,255,255) 91.4%,rgb(127,248,255) 100.0%)"></i><i style="background:linear-gradient(90deg,rgb(126,255,19) 0.0%,rgb(126,255,255) 54.6%,rgb(126,255,255) 92.3%,rgb(126,248,255) 100.0%)"></i><i style="background:linear-gradient(90deg,rgb(125,255,19) 0.0%,rgb(125,255,255) 54.6%,rgb(125,255,255) 93.1%,rgb(125,249,255) 100.0%)"></i><i style="background:linear-gradient(90deg,rgb(123,255,19) 0.0%,rgb(123,255,255) 54.6%,rgb(123,255,255) 93.9%,rgb(123,250,255) 100.0%)"></i><i style="background:linear-gradient(90deg,rgb(122,255,19) 0.0%,rgb(122,255,255) 54.6%,rgb(122,255,255) 94.7%,rgb(122,251,255) 100.0%)"></i><i style="background:linear-gradient(90deg,rgb(121,255,19) 0.0%,rgb(121,255,255) 54.6%,rgb(121,255,255) 95.5%,rgb(121,251,255) 100.0%)"></i><i style="background:linear-gradient(90deg,rgb(119,255,19) 0.0%,rgb(119,255,255) 54.6%,rgb(119,255,255) 96.3%,rgb(119,252,255) 100.0%)"></i><i style="background:linear-gradient(90deg,rgb(118,255,19) 0.0%,rgb(118,255,255) 54.6%,rgb(118,255,255) 97.1%,rgb(118,253,255) 100.0%)"></i><i style="background:linear-gradient(90deg,rgb(117,255,19) 0.0%,rgb(117,255,255) 54.6%,rgb(117,255,255) 97.9%,rgb(117,253,255) 100.0%)"></i><i style="background:linear-gradient(90deg,rgb(115,255,19) 0.0%,rgb(115,255,255) 54.6%,rgb(115,255,255) 98.7%,rgb(115,254,255) 100.0%)"></i><i style="background:linear-gradient(90deg,rgb(114,255,19) 0.0%,rgb(114,255,255) 54.6%,rgb(114,255,255) 99.5%,rgb(114,255,255) 100.0%)"></i><i style="background:linear-gradient(90deg,rgb(113,255,19) 0.0%,rgb(113,255,255) 54.6%,rgb(113,255,255) 100.0%)"></i><i style="background:linear-gradient(90deg,rgb(111,255,19) 0.0%,rgb(111,255,255) 54.6%,rgb(111,255,255) 100.0%)"></i><i style="background:linear-gradient(90deg,rgb(110,255,19) 0.0%,rgb(110,255,255) 54.6%,rgb(110,255,255) 100.0%)"></i><i style="background:linear-gradient(90deg,rgb(109,255,19) 0.0%,rgb(109,255,255) 54.6%,rgb(109,255,255) 100.0%)"></i><i style="background:linear-gradient(90deg,rgb(107,255,19) 0.0%,rgb(107,255,255) 54.6%,rgb(107,255,255) 100.0%)"></i><i style="background:linear-gradient(90deg,rgb(106,255,19) 0.0%,rgb(106,255,255) 54.6%,rgb(106,255,255) 100.0%)"></i><i style="background:linear-gradient(90deg,rgb(105,255,19) 0.0%,rgb(105,255,255) 54.6%,rgb(105,255,255) 100.0%)"></i><i style="background:linear-gradient(90deg,rgb(103,255,19) 0.0%,rgb(103,255,255) 54.6%,rgb(103,255,255) 100.0%)"></i><i style="background:linear-gradient(90deg,rgb(102,255,19) 0.0%,rgb(102,255,255) 54.6%,rgb(102,255,255) 100.0%)"></i><i style="background:linear-gradient(90deg,rgb(101,255,19) 0.0%,rgb(101,255,255) 54.6%,rgb(101,255,255) 100.0%)"></i><i style="background:linear-gradient(90deg,rgb(99,255,19) 0.0%,rgb(99,255,255) 54.6%,rgb(99,255,255) 100.0%)"></i><i style="background:linear-gradient(90deg,rgb(98,255,19) 0.0%,rgb(98,255,255) 54.6%,rgb(98,255,255) 100.0%)"></i><i style="background:linear-gradient(90deg,rgb(97,255,19) 0.0%,rgb(97,255,255) 54.6%,rgb(97,255,255) 100.0%)"></i><i style="background:linear-gradient(90deg,rgb(95,255,19) 0.0%,rgb(95,255,255) 54.6%,rgb(95,255,255) 100.0%)"></i><i style="background:linear-gradient(90deg,rgb(94,255,19) 0.0%,rgb(94,255,255) 54.6%,rgb(94,255,255) 100.0%)"></i><i style="background:linear-gradient(90deg,rgb(93,255,19) 0.0%,rgb(93,255,255) 54.6%,rgb(93,255,255) 100.0%)"></i><i style="background:linear-gradient(90deg,rgb(91,255,19) 0.0%,rgb(91,255,255) 54.6%,rgb(91,255,255) 100.0%)"></i><i style="background:linear-gradient(90deg,rgb(90,255,19) 0.0%,rgb(90,255,255) 54.6%,rgb(90,255,255) 100.0%)"></i><i style="background:linear-gradient(90deg,rgb(89,255,19) 0.0%,rgb(89,255,255) 54.6%,rgb(89,255,255) 100.0%)"></i><i style="background:linear-gradient(90deg,rgb(87,255,19) 0.0%,rgb(87,255,255) 54.6%,rgb(87,255,255) 100.0%)"></i><i style="background:linear-gradient(90deg,rgb(86,255,19) 0.0%,rgb(86,255,255) 54.6%,rgb(86,255,255) 100.0%)"></i><i style="background:linear-gradient(90deg,rgb(85,255,19) 0.0%,rgb(85,255,255) 54.6%,rgb(85,255,255) 100.0%)"></i><i style="background:linear-gradient(90deg,rgb(83,255,19) 0.0%,rgb(83,255,255) 54.6%,rgb(83,255,255) 100.0%)"></i><i style="background:linear-gradient(90deg,rgb(82,255,19) 0.0%,rgb(82,255,255) 54.6%,rgb(82,255,255) 100.0%)"></i><i style="background:linear-gradient(90deg,rgb(81,255,19) 0.0%,rgb(81,255,255) 54.6%,rgb(81,255,255) 100.0%)"></i><i style="background:linear-gradient(90deg,rgb(79,255,19) 0.0%,rgb(79,255,255) 54.6%,rgb(79,255,255) 100.0%)"></i><i style="background:linear-gradient(90deg,rgb(78,255,19) 0.0%,rgb(78,255,255) 54.6%,rgb(78,255,255) 100.0%)"></i><i style="background:linear-gradient(90deg,rgb(77,255,19) 0.0%,rgb(77,255,255) 54.6%,rgb(77,255,255) 100.0%)"></i><i style="background:linear-gradient(90deg,rgb(75,255,19) 0.0%,rgb(75,255,255) 54.6%,rgb(75,255,255) 100.0%)"></i><i style="background:linear-gradient(90deg,rgb(74,255,19) 0.0%,rgb(74,255,255) 54.6%,rgb(74,255,255) 100.0%)"></i><i style="background:linear-gradient(90deg,rgb(73,255,19) 0.0%,rgb(73,255,255) 54.6%,rgb(73,255,255) 100.0%)"></i><i style="background:linear-gradient(90deg,rgb(71,255,19) 0.0%,rgb(71,255,255) 54.6%,rgb(71,255,255) 100.0%)"></i><i style="background:linear-gradient(90deg,rgb(70,255,19) 0.0%,rgb(70,255,255) 54.6%,rgb(70,255,255) 100.0%)"></i><i style="background:linear-gradient(90deg,rgb(69,255,19) 0.0%,rgb(69,255,255) 54.6%,rgb(69,255,255) 100.0%)"></i><i style="background:linear-gradient(90deg,rgb(67,255,19) 0.0%,rgb(67,255,255) 54.6%,rgb(67,255,255) 100.0%)"></i><i style="background:linear-gradient(90deg,rgb(66,255,19) 0.0%,rgb(66,255,255) 54.6%,rgb(66,255,255) 100.0%)"></i><i style="background:linear-gradient(90deg,rgb(65,255,19) 0.0%,rgb(65,255,255) 54.6%,rgb(65,255,255) 100.0%)"></i></div>
<svg class="a" style="left:149px;top:417px" width="17" height="17" viewBox="0 0 17 17" fill="none" stroke="#111" stroke-width="1"><circle cx="8.500" cy="8.500" r="4"/><path d="M8.500 0.500v4M8.500 12.500v4M0.500 8.500h4M12.500 8.500h4"/><rect x="8" y="8" width="1" height="1" fill="#111" stroke="none"/></svg>
<div class="a" style="left:297px;top:297px;width:23px;height:258px;border:1px solid #8c8c8c;background:linear-gradient(#fff,#000)"></div>
<div class="a" style="left:298px;top:318px;width:21px;height:1px;background:#000"></div>
<div class="sw" style="left:408px;top:293px;background:#111111"></div>
<div class="sw" style="left:425px;top:293px;background:#993300"></div>
<div class="sw" style="left:441px;top:293px;background:#333300"></div>
<div class="sw" style="left:458px;top:293px;background:#003300"></div>
<div class="sw" style="left:474px;top:293px;background:#003366"></div>
<div class="sw" style="left:491px;top:293px;background:#000080"></div>
<div class="sw" style="left:507px;top:293px;background:#333399"></div>
<div class="sw" style="left:524px;top:293px;background:#333333"></div>
<div class="sw" style="left:408px;top:313px;background:#800000"></div>
<div class="sw" style="left:425px;top:313px;background:#ff6600"></div>
<div class="sw" style="left:441px;top:313px;background:#808000"></div>
<div class="sw" style="left:458px;top:313px;background:#008000"></div>
<div class="sw" style="left:474px;top:313px;background:#008080"></div>
<div class="sw" style="left:491px;top:313px;background:#0000e6"></div>
<div class="sw" style="left:507px;top:313px;background:#666699"></div>
<div class="sw" style="left:524px;top:313px;background:#808080"></div>
<div class="sw" style="left:408px;top:332px;background:#e60c00"></div>
<div class="sw" style="left:425px;top:332px;background:#ff9900"></div>
<div class="sw" style="left:441px;top:332px;background:#99cc00"></div>
<div class="sw" style="left:458px;top:332px;background:#339966"></div>
<div class="sw" style="left:474px;top:332px;background:#33cccc"></div>
<div class="sw" style="left:491px;top:332px;background:#3366ff"></div>
<div class="sw" style="left:507px;top:332px;background:#800080"></div>
<div class="sw" style="left:524px;top:332px;background:#999999"></div>
<div class="sw" style="left:408px;top:352px;background:#ff00ff"></div>
<div class="sw" style="left:425px;top:352px;background:#ffcc00"></div>
<div class="sw" style="left:441px;top:352px;background:#ffff24"></div>
<div class="sw" style="left:458px;top:352px;background:#00ff10"></div>
<div class="sw" style="left:474px;top:352px;background:#14f0ff"></div>
<div class="sw" style="left:491px;top:352px;background:#00ccff"></div>
<div class="sw" style="left:507px;top:352px;background:#993366"></div>
<div class="sw" style="left:524px;top:352px;background:#c0c0c0"></div>
<div class="sw" style="left:408px;top:371px;background:#ff99cc"></div>
<div class="sw" style="left:425px;top:371px;background:#ffcc99"></div>
<div class="sw" style="left:441px;top:371px;background:#f8f890"></div>
<div class="sw" style="left:458px;top:371px;background:#ccffcc"></div>
<div class="sw" style="left:474px;top:371px;background:#ccffff"></div>
<div class="sw" style="left:491px;top:371px;background:#99ccff"></div>
<div class="sw" style="left:507px;top:371px;background:#cc99ff"></div>
<div class="sw" style="left:524px;top:371px;background:#ebebeb"></div>
<div class="inp" style="left:392px;top:397px;width:39px">235</div>
<div class="inp" style="left:497px;top:397px;width:42px">235</div>
<div class="a" style="left:360px;top:401px;width:20px;text-align:right;font-size:11px;line-height:13px;color:#f4f4f4">Y</div>
<div class="inp" style="left:392px;top:421px;width:39px">128</div>
<div class="inp" style="left:497px;top:421px;width:42px">235</div>
<div class="a" style="left:360px;top:425px;width:20px;text-align:right;font-size:11px;line-height:13px;color:#f4f4f4">Cr</div>
<div class="inp" style="left:392px;top:444px;width:39px">128</div>
<div class="inp" style="left:497px;top:444px;width:42px">235</div>
<div class="a" style="left:360px;top:448px;width:20px;text-align:right;font-size:11px;line-height:13px;color:#f4f4f4">Cb</div>
<svg style="position:absolute;left:453px;top:401px;overflow:visible" width="14" height="16" viewBox="0 0 14 16"><text x="0" y="10.500" font-size="12" fill="#fff">红</text></svg>
<svg style="position:absolute;left:453px;top:425px;overflow:visible" width="14" height="16" viewBox="0 0 14 16"><text x="0" y="10.500" font-size="12" fill="#fff">绿</text></svg>
<svg style="position:absolute;left:453px;top:448px;overflow:visible" width="14" height="16" viewBox="0 0 14 16"><text x="0" y="10.500" font-size="12" fill="#fff">蓝</text></svg>
<div class="a" style="left:331px;top:470px;width:41px;height:41px;background:#ebebeb;border:1px solid;border-color:#333 #999 #999 #333"></div>
<div class="a" style="left:328px;top:514px;width:13.500px;height:13.500px;border:1.400px solid #f4f4f4"></div>
<div class="a" style="left:346px;top:516px;font-size:11px;line-height:13px;color:#f4f4f4">IRE</div>
<svg style="position:absolute;left:363px;top:516px;overflow:visible" width="26" height="16" viewBox="0 0 26 16"><text x="0" y="10.500" font-size="12" fill="#fff">警告</text></svg>
<div class="a" style="left:344px;top:536px;font-size:11px;line-height:13px;color:#f4f4f4;letter-spacing:0.050px">100.0(100.0,100.0)IRE</div>
<div class="a" style="left:465px;top:470px;width:74px;height:73px;background:#000;border:1px solid #8a8a8a"></div>
<svg class="a" style="left:465px;top:470px" width="74" height="73" viewBox="465 470 74 73" fill="none" stroke="#fff" stroke-width="1.100"><path d="M501.200 501.200l2.300-1.400 1.700-2 1.400-0.900h2.300l2.100 1.900v2.700l-2.100 1.700-1.300 0.600v1.700l-0.700 1z"/><path d="M502 502.800l-7.900 7.400-2 3.100v2.300h2.400l3.300-2.300 7.400-7.100"/><path d="M502.900 504.900l-6.400 6.400" stroke-width="0.900"/></svg>
<div class="btn" style="left:375px;top:555px;width:73px"></div>
<div class="btn" style="left:465px;top:555px;width:73px"></div>
<svg style="position:absolute;left:399px;top:560px;overflow:visible" width="26" height="16" viewBox="0 0 26 16"><text x="0.200" y="10.700" font-size="12" fill="#fff">确定</text></svg>
<svg style="position:absolute;left:489px;top:560px;overflow:visible" width="26" height="16" viewBox="0 0 26 16"><text x="0.200" y="10.700" font-size="12" fill="#fff">取消</text></svg>
<svg class="a" style="left:0;top:0" width="720" height="594" viewBox="0 0 720 594">
<ellipse cx="51.200" cy="133.900" rx="19.300" ry="20.700" fill="none" stroke="#f23434" stroke-width="2.700"/>
<polygon fill="#f5373c" points="62.4,155.0 514.7,372.3 512.4,373.6 523.0,373.5 516.4,365.3 516.8,367.9 62.6,154.4"/>
<polygon fill="#f5373c" points="526.7,382.8 419.6,541.0 418.600,538.500 417.200,549.0 426.300,543.600 423.700,543.700 527.300,383.200"/>
</svg>
</body></html>
